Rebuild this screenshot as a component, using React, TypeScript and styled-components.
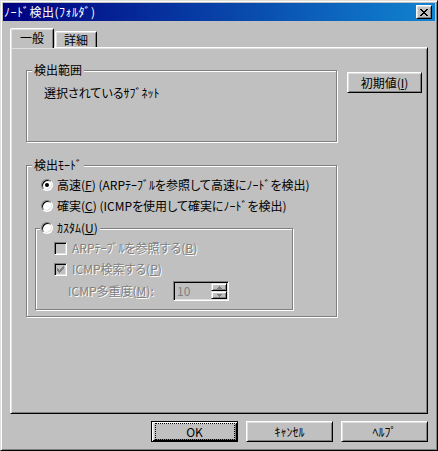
import React from "react";
import styled, { createGlobalStyle, css } from "styled-components";

const GlobalStyle = createGlobalStyle`
  html, body { margin: 0; padding: 0; background: #c0c0c0; }
  body {
    font-family: "Noto Sans CJK JP", "Noto Sans", sans-serif;
    font-size: 12px;
  }
  * { box-sizing: border-box; }
  u { text-underline-offset: 1px; }
`;

const FONT = `"Noto Sans CJK JP", "Noto Sans", sans-serif`;

const Window = styled.div`
  width: 438px;
  height: 451px;
  display: flex;
  flex-direction: column;
  background: #c0c0c0;
  border: 1px solid;
  border-color: #dfdfdf #000 #000 #dfdfdf;
  box-shadow: inset 1px 1px #fff, inset -1px -1px #808080;
  padding: 2px;
  color: #000;
  font-family: ${FONT};
  font-size: 12px;
  line-height: 14px;
  font-feature-settings: "palt";
`;

const TitleBar = styled.div`
  height: 18px;
  flex: none;
  display: flex;
  align-items: center;
  justify-content: space-between;
  padding: 0 3px 0 1px;
  background: linear-gradient(to right, #000080, #1084d0);
  color: #fff;
`;

const Title = styled.span`
  white-space: nowrap;
  letter-spacing: 0.5px;
`;

const CloseButton = styled.div`
  width: 16px;
  height: 14px;
  display: flex;
  align-items: center;
  justify-content: center;
  background: #c0c0c0;
  border: 1px solid;
  border-color: #fff #000 #000 #fff;
  box-shadow: inset 1px 1px #dfdfdf, inset -1px -1px #808080;
`;

const Body = styled.div`
  flex: 1;
  display: flex;
  flex-direction: column;
  padding: 7px 7px 6px 7px;
`;

const TabStrip = styled.div`
  display: flex;
  align-items: flex-end;
  height: 19px;
  flex: none;
  position: relative;
  z-index: 1;
`;

const Tab = styled.div<{ $active?: boolean; $w: number }>`
  width: ${(p) => p.$w}px;
  display: flex;
  align-items: center;
  justify-content: center;
  background: #c0c0c0;
  border: 1px solid;
  border-bottom: none;
  border-color: #fff #000 #000 #fff;
  border-radius: 2px 2px 0 0;
  box-shadow: inset 1px 1px #dfdfdf, inset -1px 0 #808080;
  ${(p) =>
    p.$active
      ? css`
          height: 20px;
          margin-bottom: -1px;
          padding-bottom: 1px;
        `
      : css`
          height: 16px;
          margin-left: 1px;
        `}
`;

const Panel = styled.div`
  flex: 1;
  display: flex;
  flex-direction: column;
  border: 1px solid;
  border-color: #fff #000 #000 #fff;
  box-shadow: inset 1px 1px #dfdfdf, inset -1px -1px #808080;
  padding: 22px 0 0 15px;
`;

const TopRow = styled.div`
  display: flex;
  align-items: flex-start;
`;

const Group = styled.div<{ $w: number; $h: number; $pad: string }>`
  position: relative;
  flex: none;
  width: ${(p) => p.$w}px;
  height: ${(p) => p.$h}px;
  padding: ${(p) => p.$pad};
  border: 1px solid #808080;
  box-shadow: inset 1px 1px #fff, 1px 1px #fff;
`;

const GroupLabel = styled.span`
  position: absolute;
  top: -8px;
  left: 5px;
  padding: 0 2px;
  background: #c0c0c0;
  white-space: nowrap;
`;

const PlainText = styled.div`
  white-space: nowrap;
`;

const Button = styled.div<{ $w: number; $default?: boolean }>`
  position: relative;
  width: ${(p) => p.$w}px;
  height: 21px;
  flex: none;
  display: flex;
  align-items: center;
  justify-content: center;
  background: #c0c0c0;
  white-space: nowrap;
  border: 1px solid;
  ${(p) =>
    p.$default
      ? css`
          border-color: #000;
          box-shadow: inset 1px 1px #fff, inset -1px -1px #000,
            inset 2px 2px #dfdfdf, inset -2px -2px #808080;
          &::after {
            content: "";
            position: absolute;
            left: 3px;
            top: 1px;
            right: 2px;
            bottom: 1px;
            border: 1px dotted #000;
          }
        `
      : css`
          border-color: #fff #000 #000 #fff;
          box-shadow: inset 1px 1px #dfdfdf, inset -1px -1px #808080;
        `}
`;

const ResetButton = styled(Button)`
  margin: 2px 0 0 10px;
`;

const ModeGroup = styled(Group)`
  margin-top: 23px;
`;

const OptionRow = styled.div<{ $gap?: number }>`
  display: flex;
  align-items: center;
  height: 14px;
  gap: 4px;
  padding-left: 6px;
  white-space: nowrap;
  margin-top: ${(p) => p.$gap ?? 0}px;
`;

const InnerGroup = styled(Group)`
  margin-top: 15px;
`;

const InnerLegend = styled.div`
  position: absolute;
  top: -8px;
  left: 4px;
  padding: 0 2px 0 1px;
  height: 14px;
  display: flex;
  align-items: center;
  gap: 4px;
  background: #c0c0c0;
  white-space: nowrap;
`;

const Radio = styled.span<{ $checked?: boolean }>`
  position: relative;
  width: 12px;
  height: 12px;
  flex: none;
  border-radius: 50%;
  background: #fff;
  border: 1px solid;
  border-color: #808080 #fff #fff #808080;
  box-shadow: inset 1px 1px #000, inset -1px -1px #dfdfdf;
  ${(p) =>
    p.$checked &&
    css`
      &::after {
        content: "";
        position: absolute;
        left: 3px;
        top: 3px;
        width: 4px;
        height: 4px;
        border-radius: 50%;
        background: #000;
      }
    `}
`;

const CheckRow = styled.div<{ $gap?: number }>`
  display: flex;
  align-items: center;
  height: 14px;
  gap: 5px;
  white-space: nowrap;
  margin-top: ${(p) => p.$gap ?? 0}px;
`;

const CheckBox = styled.span`
  width: 13px;
  height: 13px;
  flex: none;
  display: flex;
  align-items: center;
  justify-content: center;
  background: #c0c0c0;
  border: 1px solid;
  border-color: #808080 #fff #fff #808080;
  box-shadow: inset 1px 1px #000, inset -1px -1px #dfdfdf;
`;

const Disabled = styled.span`
  color: #808080;
  text-shadow: 1px 1px 0 #fff;
`;

const SpinRow = styled.div`
  display: flex;
  align-items: center;
  height: 20px;
  margin-top: 5px;
`;

const SpinLabel = styled(Disabled)`
  width: 119px;
  padding-left: 14px;
  white-space: nowrap;
`;

const SpinBox = styled.div`
  width: 56px;
  height: 20px;
  display: flex;
  align-items: stretch;
  border: 1px solid;
  border-color: #808080 #fff #fff #808080;
  box-shadow: inset 1px 1px #000, inset -1px -1px #dfdfdf;
  padding: 1px;
  background: #c0c0c0;
`;

const SpinValue = styled.span`
  flex: 1;
  display: flex;
  align-items: center;
  padding-left: 2px;
  color: #808080;
`;

const SpinButtons = styled.div`
  width: 16px;
  display: flex;
  flex-direction: column;
`;

const SpinBtn = styled.div`
  flex: 1;
  display: flex;
  align-items: center;
  justify-content: center;
  border: 1px solid;
  border-color: #dfdfdf #000 #000 #dfdfdf;
  box-shadow: inset 1px 1px #fff, inset -1px -1px #808080;
`;

const ButtonRow = styled.div`
  display: flex;
  justify-content: flex-end;
  gap: 8px;
  margin-top: 7px;
  flex: none;
`;

const CloseGlyph = () => (
  <svg width="8" height="7" viewBox="0 0 8 7" shapeRendering="crispEdges">
    <path
      fill="#000"
      d="M0 0h2v1H0zM6 0h2v1H6zM1 1h2v1H1zM5 1h2v1H5zM2 2h4v1H2zM3 3h2v1H3zM2 4h4v1H2zM1 5h2v1H1zM5 5h2v1H5zM0 6h2v1H0zM6 6h2v1H6z"
    />
  </svg>
);

const CheckGlyph = () => (
  <svg width="7" height="7" viewBox="0 0 7 7" shapeRendering="crispEdges">
    <path
      fill="#808080"
      d="M6 0h1v1H6zM5 1h2v1H5zM0 2h1v1H0zM4 2h3v1H4zM0 3h2v1H0zM3 3h3v1H3zM0 4h5v1H0zM1 5h3v1H1zM2 6h1v1H2z"
    />
  </svg>
);

const Arrow = ({ up }: { up?: boolean }) => (
  <svg width="5" height="3" viewBox="0 0 5 3" shapeRendering="crispEdges">
    <path
      fill="#808080"
      d={up ? "M2 0h1v1H2zM1 1h3v1H1zM0 2h5v1H0z" : "M0 0h5v1H0zM1 1h3v1H1zM2 2h1v1H2z"}
    />
  </svg>
);

export default function App() {
  return (
    <>
      <GlobalStyle />
      <Window>
        <TitleBar>
          <Title>ﾉｰﾄﾞ検出(ﾌｫﾙﾀﾞ)</Title>
          <CloseButton>
            <CloseGlyph />
          </CloseButton>
        </TitleBar>
        <Body>
          <TabStrip>
            <Tab $active $w={44}>一般</Tab>
            <Tab $w={42}>詳細</Tab>
          </TabStrip>
          <Panel>
            <TopRow>
              <Group $w={311} $h={72} $pad="15px 0 0 17px">
                <GroupLabel>検出範囲</GroupLabel>
                <PlainText>選択されているｻﾌﾞﾈｯﾄ</PlainText>
              </Group>
              <ResetButton $w={75}>
                初期値(<u>I</u>)
              </ResetButton>
            </TopRow>
            <ModeGroup $w={311} $h={152} $pad="12px 0 0 8px">
              <GroupLabel>検出ﾓｰﾄﾞ</GroupLabel>
              <OptionRow>
                <Radio $checked />
                <span>
                  高速(<u>F</u>) (ARPﾃｰﾌﾞﾙを参照して高速にﾉｰﾄﾞを検出)
                </span>
              </OptionRow>
              <OptionRow $gap={7}>
                <Radio />
                <span>
                  確実(<u>C</u>) (ICMPを使用して確実にﾉｰﾄﾞを検出)
                </span>
              </OptionRow>
              <InnerGroup $w={258} $h={82} $pad="12px 0 0 18px">
                <InnerLegend>
                  <Radio />
                  <span>
                    ｶｽﾀﾑ(<u>U</u>)
                  </span>
                </InnerLegend>
                <CheckRow>
                  <CheckBox />
                  <Disabled>
                    ARPﾃｰﾌﾞﾙを参照する(<u>B</u>)
                  </Disabled>
                </CheckRow>
                <CheckRow $gap={7}>
                  <CheckBox>
                    <CheckGlyph />
                  </CheckBox>
                  <Disabled>
                    ICMP検索する(<u>P</u>)
                  </Disabled>
                </CheckRow>
                <SpinRow>
                  <SpinLabel>
                    ICMP多重度(<u>M</u>):
                  </SpinLabel>
                  <SpinBox>
                    <SpinValue>10</SpinValue>
                    <SpinButtons>
                      <SpinBtn>
                        <Arrow up />
                      </SpinBtn>
                      <SpinBtn>
                        <Arrow />
                      </SpinBtn>
                    </SpinButtons>
                  </SpinBox>
                </SpinRow>
              </InnerGroup>
            </ModeGroup>
          </Panel>
          <ButtonRow>
            <Button $w={87} $default>
              OK
            </Button>
            <Button $w={87}>ｷｬﾝｾﾙ</Button>
            <Button $w={87}>ﾍﾙﾌﾟ</Button>
          </ButtonRow>
        </Body>
      </Window>
    </>
  );
}
